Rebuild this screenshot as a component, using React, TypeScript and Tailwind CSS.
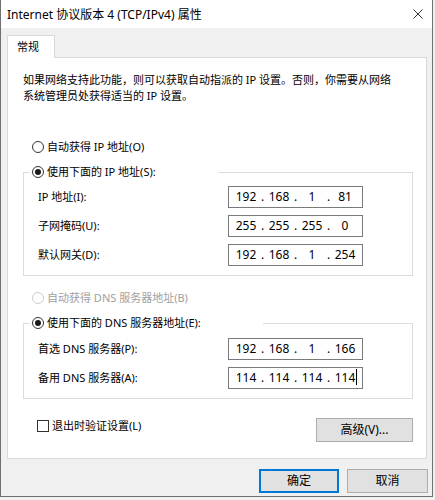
import React from "react";

const FONT = { fontFamily: '"Noto Sans", "Noto Sans CJK SC", sans-serif' };

function Radio({ checked, disabled }: { checked?: boolean; disabled?: boolean }) {
  return (
    <span
      className={`flex h-[12px] w-[12px] shrink-0 items-center justify-center rounded-full border bg-white ${
        disabled ? "border-[#cccccc]" : "border-[#333333]"
      }`}
    >
      {checked && <span className="h-[6px] w-[6px] rounded-full bg-[#1a1a1a]" />}
    </span>
  );
}

function IpBox({ parts, caret }: { parts: string[]; caret?: boolean }) {
  return (
    <div className="flex h-[22px] w-[135px] items-center border border-[#7a7a7a] bg-white pl-[3px] text-[12px] leading-[16px]">
      {parts.map((p, i) => (
        <React.Fragment key={i}>
          <span className="w-[28px] text-center">
            <span className="relative">
              {p}
              {caret && i === 3 && (
                <span className="absolute right-[-2px] top-[0px] h-[16px] w-[1px] bg-black" />
              )}
            </span>
          </span>
          {i < 3 && <span className="w-[5px] text-center">.</span>}
        </React.Fragment>
      ))}
    </div>
  );
}

function Row({ label, parts, caret }: { label: string; parts: string[]; caret?: boolean }) {
  return (
    <div className="flex items-center">
      <span className="w-[204px] pl-[14px]">{label}</span>
      <IpBox parts={parts} caret={caret} />
    </div>
  );
}

function Btn({ children, primary, w }: { children: React.ReactNode; primary?: boolean; w: string }) {
  return (
    <div
      className={`flex h-[24px] items-center justify-center bg-[#e1e1e1] text-[12px] ${w} ${
        primary ? "border-2 border-[#0078d7]" : "border border-[#adadad]"
      }`}
    >
      {children}
    </div>
  );
}

export default function App() {
  return (
    <div className="h-[500px] w-[435px] bg-[#f0f0f0]" style={FONT}>
      <div className="flex h-[497px] w-[433px] flex-col border-x border-b border-[#707070] bg-[#f0f0f0] text-[11px] leading-[16px] text-black">
        {/* title bar */}
        <div className="flex h-[28px] shrink-0 items-center justify-between bg-white pl-[6px] pr-[9px]">
          <span className="pt-[2px] text-[12px]">Internet 协议版本 4 (TCP/IPv4) 属性</span>
          <svg width="10" height="10" viewBox="0 0 10 10" className="mt-[-1px]">
            <path d="M0.5 0.5 L9.5 9.5 M9.5 0.5 L0.5 9.5" stroke="#333" strokeWidth="1" />
          </svg>
        </div>

        {/* tab header */}
        <div className="mt-[7px] flex pl-[6px]">
          <div className="relative z-10 mb-[-1px] flex h-[23px] w-[48px] items-center border-x border-t border-[#d9d9d9] bg-white pl-[9px] text-[11px]">
            常规
          </div>
        </div>

        {/* panel */}
        <div className="mx-[6px] flex h-[402px] w-[420px] flex-col border border-[#d9d9d9] bg-white pl-[15px] pr-[13px] pt-[14px]">
          <p className="leading-[16px]">
            如果网络支持此功能，则可以获取自动指派的 IP 设置。否则，你需要从网络
            <br />
            系统管理员处获得适当的 IP 设置。
          </p>

          <div className="mt-[35px] flex h-[16px] items-center gap-[3px] pl-[9px]">
            <Radio />
            <span>自动获得 IP 地址(O)</span>
          </div>

          <fieldset className="mt-[9px] border border-[#dcdcdc] pb-[9px]">
            <legend className="ml-[6px] flex h-[16px] w-[188px] items-center gap-[3px] bg-white pl-[2px]">
              <Radio checked />
              <span>使用下面的 IP 地址(S):</span>
            </legend>
            <div className="mt-[6px] flex flex-col gap-[7px]">
              <Row label="IP 地址(I):" parts={["192", "168", "1", "81"]} />
              <Row label="子网掩码(U):" parts={["255", "255", "255", "0"]} />
              <Row label="默认网关(D):" parts={["192", "168", "1", "254"]} />
            </div>
          </fieldset>

          <div className="mt-[14px] flex h-[16px] items-center gap-[3px] pl-[9px] text-[#a0a0a0]">
            <Radio disabled />
            <span>自动获得 DNS 服务器地址(B)</span>
          </div>

          <fieldset className="mt-[9px] border border-[#dcdcdc] pb-[9px]">
            <legend className="ml-[6px] flex h-[16px] w-[233px] items-center gap-[3px] bg-white pl-[2px]">
              <Radio checked />
              <span>使用下面的 DNS 服务器地址(E):</span>
            </legend>
            <div className="mt-[7px] flex flex-col gap-[7px]">
              <Row label="首选 DNS 服务器(P):" parts={["192", "168", "1", "166"]} />
              <Row label="备用 DNS 服务器(A):" parts={["114", "114", "114", "114"]} caret />
            </div>
          </fieldset>

          <div className="mt-[19px] flex items-start justify-between">
            <div className="flex items-center gap-[3px] pl-[14px]">
              <span className="h-[12px] w-[12px] border border-[#333333] bg-white" />
              <span>退出时验证设置(L)</span>
            </div>
            <Btn w="w-[97px]">高级(V)...</Btn>
          </div>
        </div>

        {/* bottom buttons */}
        <div className="mt-[10px] flex justify-end gap-[8px] pr-[4px]">
          <Btn primary w="w-[80px]">确定</Btn>
          <Btn w="w-[81px]">取消</Btn>
        </div>
      </div>
    </div>
  );
}
